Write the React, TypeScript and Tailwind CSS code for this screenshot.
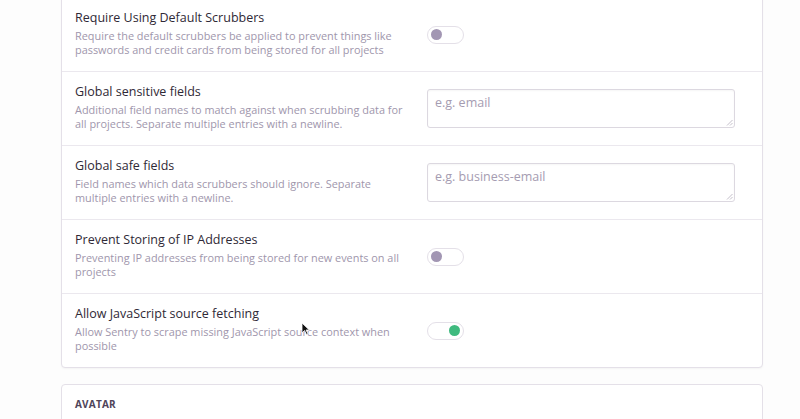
import React from "react";

const font = { fontFamily: '"Open Sans", "Noto Sans", sans-serif' };

function Toggle({ on }: { on?: boolean }) {
  return (
    <div className="w-[37px] h-[18px] rounded-full border border-[#e4e0e8] bg-white flex items-center px-[3px]">
      <div
        className={
          on
            ? "w-[11px] h-[11px] rounded-full bg-[#3fba7f] ml-auto"
            : "w-[11px] h-[11px] rounded-full bg-[#a296b3]"
        }
      />
    </div>
  );
}

function Row({
  title,
  desc,
  children,
  last,
}: {
  title: string;
  desc: string;
  children: React.ReactNode;
  last?: boolean;
}) {
  return (
    <div
      className={
        last
          ? "flex items-center h-[73px] pl-[13px]"
          : "flex items-center h-[74px] pl-[13px] border-b border-[#ebe8ee]"
      }
    >
      <div className="w-[352px] pr-[18px] -mt-[3px]">
        <div className="text-[12.5px] leading-[16px] text-[#2f2936] mb-[3px]">{title}</div>
        <div className="text-[10.9px] leading-[14px] text-[#a096ac]">{desc}</div>
      </div>
      <div className="flex-1 flex items-center">{children}</div>
    </div>
  );
}

function Area({ placeholder }: { placeholder: string }) {
  return (
    <div className="relative w-[308px] h-[39px] border border-[#dcd8e0] rounded-[3px] bg-white px-[7px] pt-[4px] text-[12.5px] text-[#a59cb1] shadow-[inset_0_1px_2px_rgba(0,0,0,0.04)]">
      {placeholder}
      <svg className="absolute right-[1px] bottom-[1px]" width="7" height="7" viewBox="0 0 7 7">
        <path d="M6.5 1 L1 6.5 M6.5 4 L4 6.5" stroke="#b5aebd" strokeWidth="0.8" />
      </svg>
    </div>
  );
}

export default function App() {
  return (
    <div className="w-[800px] h-[419px] bg-[#fdfdfd] overflow-hidden relative" style={font}>
      <div className="ml-[61px] w-[702px] -mt-[3px] border border-[#e4e0e8] rounded-b-[4px] bg-white shadow-[0_1px_2px_rgba(0,0,0,0.04)]">
        <Row
          title="Require Using Default Scrubbers"
          desc="Require the default scrubbers be applied to prevent things like passwords and credit cards from being stored for all projects"
        >
          <Toggle />
        </Row>
        <Row
          title="Global sensitive fields"
          desc="Additional field names to match against when scrubbing data for all projects. Separate multiple entries with a newline."
        >
          <Area placeholder="e.g. email" />
        </Row>
        <Row
          title="Global safe fields"
          desc="Field names which data scrubbers should ignore. Separate multiple entries with a newline."
        >
          <Area placeholder="e.g. business-email" />
        </Row>
        <Row
          title="Prevent Storing of IP Addresses"
          desc="Preventing IP addresses from being stored for new events on all projects"
        >
          <Toggle />
        </Row>
        <Row
          title="Allow JavaScript source fetching"
          desc="Allow Sentry to scrape missing JavaScript source context when possible"
          last
        >
          <Toggle on />
        </Row>
      </div>
      <div className="ml-[61px] w-[702px] mt-[16px] h-[60px] border border-[#e4e0e8] rounded-t-[4px] bg-white">
        <div className="pl-[13px] pt-[12px] text-[10px] font-bold tracking-[0.2px] text-[#4f4459] uppercase">
          Avatar
        </div>
      </div>
      <svg className="absolute left-[301px] top-[322px]" width="9" height="13" viewBox="0 0 9 13">
        <path d="M1 1 L1 11 L3.5 8.5 L5.5 12.5 L7 11.8 L5 8 L8.3 8 Z" fill="#111" stroke="#fff" strokeWidth="0.8" />
      </svg>
    </div>
  );
}
